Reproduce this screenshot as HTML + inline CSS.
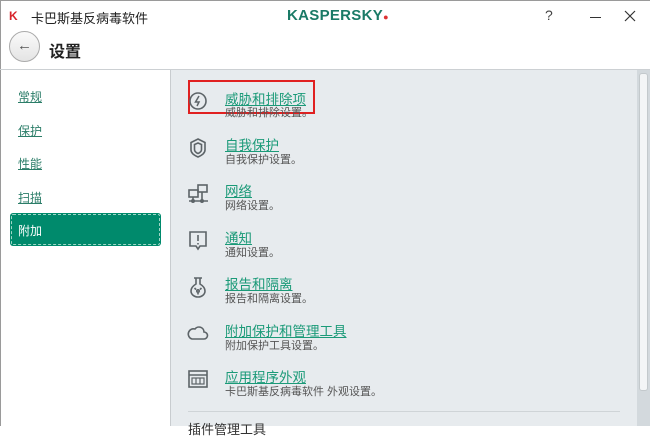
<!DOCTYPE html>
<html><head><meta charset="utf-8"><style>
*{margin:0;padding:0;box-sizing:border-box}
body{width:650px;height:426px;overflow:hidden;background:#fff;font-family:"Liberation Sans","Noto Sans CJK SC",sans-serif;position:relative}
.a{position:absolute}
.t{font-size:13.5px;color:#1b9a78;text-decoration:underline;white-space:nowrap}
.s{font-size:11px;color:#555;white-space:nowrap}
.l{font-size:12px;color:#2b7d68;text-decoration:underline}
svg{position:absolute;fill:none;stroke:#5d6468;stroke-width:1.6}
</style></head><body>
<div class="a" style="left:0;top:0;width:1px;height:426px;background:#9a9a9a"></div>
<div class="a" style="left:0;top:0;width:650px;height:1px;background:#9a9a9a"></div>
<div class="a" style="left:9px;top:9px;width:10px;height:12px;font:bold 12px 'Liberation Sans';color:#d8232a">K</div>
<div class="a" style="left:31px;top:8px;font-size:13px;color:#222">卡巴斯基反病毒软件</div>
<div class="a" style="left:287px;top:7px;font:bold 15px 'Liberation Sans';color:#1a7a66;letter-spacing:0.3px">KASPERSKY<span style="color:#d33;font-size:9px">●</span></div>
<div class="a" style="left:545px;top:7px;font-size:14px;color:#444">?</div>
<div class="a" style="left:590px;top:17px;width:11px;height:1px;background:#333"></div>
<svg style="left:624px;top:10px;stroke:#333;stroke-width:1.2" width="12" height="12"><path d="M1 1L11 11M11 1L1 11"/></svg>
<div class="a" style="left:9px;top:31px;width:31px;height:31px;border-radius:50%;border:1px solid #aaa;background:linear-gradient(#fafafa,#e4e4e4);text-align:center;line-height:28px;font-size:15px;color:#555">←</div>
<div class="a" style="left:49px;top:38px;font-size:16px;font-weight:bold;color:#222">设置</div>
<div class="a" style="left:0;top:69px;width:650px;height:1px;background:#ccd0d3"></div>
<div class="a" style="left:170px;top:70px;width:1px;height:356px;background:#c8cccf"></div>
<div class="a" style="left:171px;top:70px;width:466px;height:356px;background:#e7ebee"></div>
<div class="a" style="left:637px;top:70px;width:13px;height:356px;background:#d3d9dd"></div>
<div class="a" style="left:639px;top:73px;width:9px;height:318px;background:#f3f5f6;border:1px solid #c3c9cc;border-radius:3px"></div>
<div class="a l" style="left:18px;top:88px">常规</div>
<div class="a l" style="left:18px;top:122px">保护</div>
<div class="a l" style="left:18px;top:155px">性能</div>
<div class="a l" style="left:18px;top:189px">扫描</div>
<div class="a" style="left:10px;top:213px;width:151px;height:33px;background:#008a6c;border-radius:3px;outline:1px dashed #9fd6c6;outline-offset:-2px"></div>
<div class="a" style="left:18px;top:222px;font-size:12px;color:#fff">附加</div>

<div class="a" style="left:188px;top:80px;width:127px;height:34px;border:2px solid #e02020"></div>
<svg style="left:188px;top:91px" width="20" height="20"><circle cx="10" cy="10" r="8"/><path d="M11 5 L7.5 11 H11 L9 15" stroke-width="1.5"/></svg>
<div class="a t" style="left:225px;top:88px">威胁和排除项</div><div class="a s" style="left:225px;top:104px">威胁和排除设置。</div>
<svg style="left:188px;top:137px" width="20" height="22"><path d="M10 2 L17 5.5 V13 Q17 17 10 20 Q3 17 3 13 V5.5Z"/><path d="M10 6 L13.5 7.5 V12.5 Q13.5 15 10 16.5 Q6.5 15 6.5 12.5 V7.5Z"/></svg>
<div class="a t" style="left:225px;top:134px">自我保护</div><div class="a s" style="left:225px;top:151px">自我保护设置。</div>
<svg style="left:187px;top:183px" width="22" height="22"><rect x="2" y="7" width="9" height="7"/><rect x="11" y="2" width="9" height="7"/><path d="M6 14v3M15 9v8M2 18h19"/><circle cx="6" cy="18" r="1.2"/><circle cx="15" cy="18" r="1.2"/></svg>
<div class="a t" style="left:225px;top:180px">网络</div><div class="a s" style="left:225px;top:197px">网络设置。</div>
<svg style="left:188px;top:230px" width="20" height="22"><path d="M2 2 H18 V16 H12 L10 19 L8 16 H2Z"/><path d="M10 5 V11M10 13 V14.5"/></svg>
<div class="a t" style="left:225px;top:227px">通知</div><div class="a s" style="left:225px;top:244px">通知设置。</div>
<svg style="left:188px;top:276px" width="20" height="22"><path d="M6 2 H14 M8 2 V8 Q3 11 3 15 A7 6 0 0 0 17 15 Q17 11 12 8 V2"/><circle cx="10" cy="15" r="1.2"/><path d="M8 13.5 L6.5 12M12 13.5 L13.5 12M10 17 V18.5"/></svg>
<div class="a t" style="left:225px;top:273px">报告和隔离</div><div class="a s" style="left:225px;top:290px">报告和隔离设置。</div>
<svg style="left:187px;top:323px" width="22" height="20"><path d="M5 16 H17 A3.5 3.5 0 0 0 17 9 A5 5 0 0 0 8 6 A4 4 0 0 0 5 16Z"/></svg>
<div class="a t" style="left:225px;top:320px">附加保护和管理工具</div><div class="a s" style="left:225px;top:337px">附加保护工具设置。</div>
<svg style="left:187px;top:368px" width="22" height="22"><rect x="2" y="3" width="18" height="16"/><path d="M2 7 H20"/><rect x="5" y="10" width="12" height="6" stroke-width="1.2"/><path d="M9 10v6M13 10v6" stroke-width="1.2"/></svg>
<div class="a t" style="left:225px;top:366px">应用程序外观</div><div class="a s" style="left:225px;top:383px">卡巴斯基反病毒软件 外观设置。</div>
<div class="a" style="left:188px;top:411px;width:432px;height:1px;background:#cfd4d7"></div>
<div class="a" style="left:188px;top:419px;font-size:13px;color:#333">插件管理工具</div>
</body></html>
